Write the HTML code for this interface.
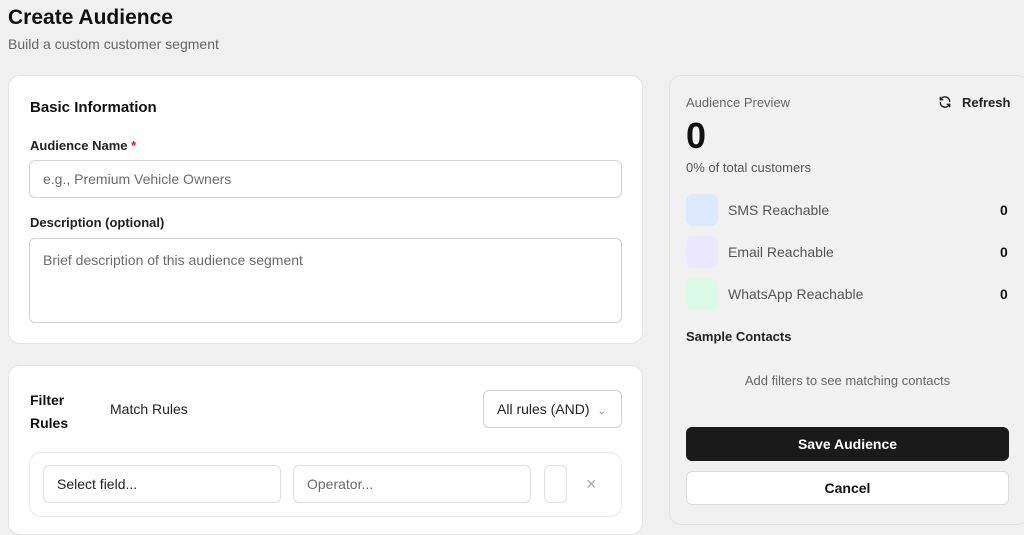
<!DOCTYPE html>
<html><head><style>
*{box-sizing:border-box;margin:0;padding:0}
body{width:1024px;height:520px;overflow:hidden;background:#f0f0f0;font-family:"Liberation Sans",sans-serif;color:#111;position:relative}
.a{position:absolute}
.card{position:absolute;background:#fff;border:1px solid #e4e4e4;border-radius:12px}
.inp{position:absolute;border:1px solid #d4d4d4;border-radius:6px;background:#fff;font-size:14px;color:#6b6b6b;padding-left:13px}
.lbl{position:absolute;font-size:13px;font-weight:bold;color:#222}
</style></head><body>
<div class="a" style="left:8px;top:6px;font-size:21px;font-weight:bold">Create Audience</div>
<div class="a" style="left:8px;top:36px;font-size:14px;color:#666">Build a custom customer segment</div>

<div class="card" style="left:8px;top:75px;width:635px;height:269px"></div>
<div class="a" style="left:30px;top:99px;font-size:15px;font-weight:bold">Basic Information</div>
<div class="lbl" style="left:30px;top:138px">Audience Name <span style="color:#e11">*</span></div>
<div class="inp" style="left:29px;top:160px;width:593px;height:38px;line-height:36px">e.g., Premium Vehicle Owners</div>
<div class="lbl" style="left:30px;top:215px">Description (optional)</div>
<div class="inp" style="left:29px;top:238px;width:593px;height:85px;padding-top:13px">Brief description of this audience segment</div>

<div class="card" style="left:8px;top:365px;width:635px;height:170px"></div>
<div class="a" style="left:30px;top:389px;font-size:14px;font-weight:bold;line-height:23px">Filter<br>Rules</div>
<div class="a" style="left:110px;top:401px;font-size:14px;color:#222">Match Rules</div>
<div class="inp" style="left:483px;top:390px;width:139px;height:38px;line-height:36px;color:#222">All rules (AND) <span style="font-size:10px;color:#888;margin-left:4px">&#8964;</span></div>
<div class="a" style="left:29px;top:452px;width:593px;height:65px;border:1px solid #eaeaea;border-radius:12px"></div>
<div class="inp" style="left:43px;top:465px;width:238px;height:38px;line-height:36px;color:#222;border-color:#e0e0e0">Select field...</div>
<div class="inp" style="left:293px;top:465px;width:238px;height:38px;line-height:36px;border-color:#e0e0e0">Operator...</div>
<div class="inp" style="left:544px;top:465px;width:23px;height:38px;border-color:#e0e0e0"></div>
<div class="a" style="left:586px;top:474px;font-size:18px;color:#aaa">×</div>

<div class="a" style="left:669px;top:75px;width:360px;height:450px;border:1px solid #e4e4e4;border-radius:12px;background:#f1f1f1"></div>
<div class="a" style="left:686px;top:95px;font-size:13px;color:#666">Audience Preview</div>
<svg class="a" style="left:938px;top:95px" width="14" height="14" viewBox="0 0 24 24" fill="none" stroke="#222" stroke-width="2.4" stroke-linecap="round"><path d="M20 11a8 8 0 0 0-14.5-4.5M4 4v4h4M4 13a8 8 0 0 0 14.5 4.5M20 20v-4h-4"/></svg>
<div class="a" style="left:962px;top:95px;font-size:13px;font-weight:bold;color:#222">Refresh</div>
<div class="a" style="left:686px;top:115px;font-size:36px;font-weight:bold">0</div>
<div class="a" style="left:686px;top:160px;font-size:13px;color:#555">0% of total customers</div>
<div class="a" style="left:686px;top:194px;width:32px;height:32px;border-radius:7px;background:#dce9ff"></div>
<div class="a" style="left:686px;top:236px;width:32px;height:32px;border-radius:7px;background:#ece9ff"></div>
<div class="a" style="left:686px;top:278px;width:32px;height:32px;border-radius:7px;background:#ddf9e8"></div>
<div class="a" style="left:728px;top:202px;font-size:14px;color:#555">SMS Reachable</div>
<div class="a" style="left:728px;top:244px;font-size:14px;color:#555">Email Reachable</div>
<div class="a" style="left:728px;top:286px;font-size:14px;color:#555">WhatsApp Reachable</div>
<div class="a" style="left:1000px;top:202px;font-size:14px;font-weight:bold">0</div>
<div class="a" style="left:1000px;top:244px;font-size:14px;font-weight:bold">0</div>
<div class="a" style="left:1000px;top:286px;font-size:14px;font-weight:bold">0</div>
<div class="a" style="left:686px;top:329px;font-size:13px;font-weight:bold;color:#222">Sample Contacts</div>
<div class="a" style="left:686px;top:373px;width:323px;text-align:center;font-size:13px;color:#666">Add filters to see matching contacts</div>
<div class="a" style="left:686px;top:427px;width:323px;height:34px;background:#1a1a1a;border-radius:6px;color:#fff;font-size:14px;font-weight:bold;text-align:center;line-height:34px">Save Audience</div>
<div class="a" style="left:686px;top:471px;width:323px;height:34px;background:#fff;border:1px solid #ddd;border-radius:6px;font-size:14px;font-weight:bold;text-align:center;line-height:32px">Cancel</div>
</body></html>
